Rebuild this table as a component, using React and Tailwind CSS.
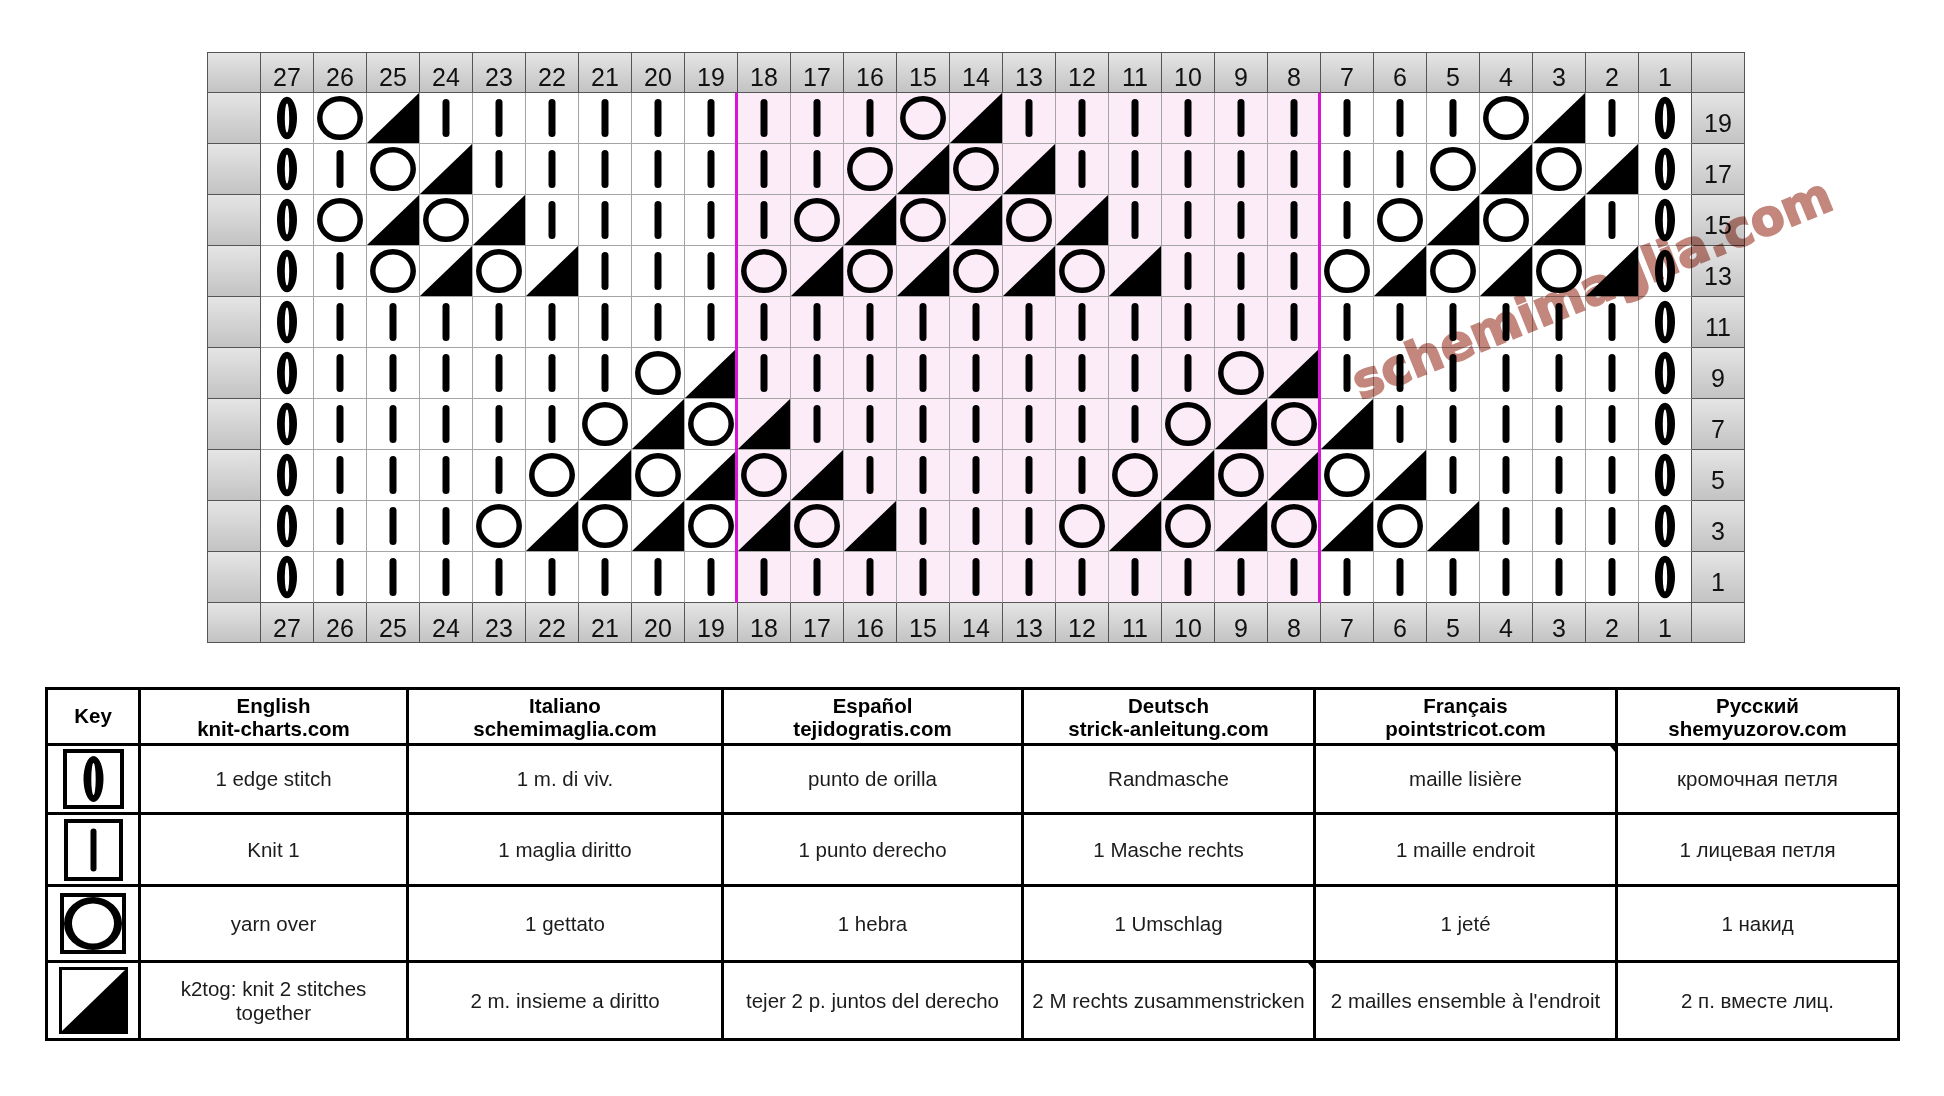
import React from 'react';

// chart rows, stitches listed from column 27 to column 1
// E = edge stitch, K = knit, O = yarn over, T = k2tog
const chartRows = [
  { n: 19, s: 'EOT' + 'KKKKKKKKK' + 'OT' + 'KKKKKKKKK' + 'OT' + 'K' + 'E' },
  { n: 17, s: 'EKOT' + 'KKKKKKK' + 'OTOT' + 'KKKKKKK' + 'OTOT' + 'E' },
  { n: 15, s: 'EOTOT' + 'KKKKK' + 'OTOTOT' + 'KKKKK' + 'OTOT' + 'KE' },
  { n: 13, s: 'EKOTOT' + 'KKK' + 'OTOTOTOT' + 'KKK' + 'OTOTOT' + 'E' },
  { n: 11, s: 'E' + 'K'.repeat(25) + 'E' },
  { n: 9, s: 'E' + 'KKKKKK' + 'OT' + 'KKKKKKKKK' + 'OT' + 'KKKKKK' + 'E' },
  { n: 7, s: 'E' + 'KKKKK' + 'OTOT' + 'KKKKKKK' + 'OTOT' + 'KKKKK' + 'E' },
  { n: 5, s: 'E' + 'KKKK' + 'OTOTOT' + 'KKKKK' + 'OTOTOT' + 'KKKK' + 'E' },
  { n: 3, s: 'E' + 'KKK' + 'OTOTOTOT' + 'KKK' + 'OTOTOTOT' + 'KKK' + 'E' },
  { n: 1, s: 'E' + 'K'.repeat(25) + 'E' },
];

const cols = Array.from({ length: 27 }, (_, i) => 27 - i);

const grayCell =
  'border-r border-b border-[#555] bg-gradient-to-b from-[#e5e5e5] to-[#c3c3c3]';
const numText = "text-[25px] leading-none text-[#111] font-['Liberation_Sans',Arial,sans-serif]";

const Stitch = ({ t }) => {
  if (t === 'E') {
    return (
      <svg viewBox="0 0 52 50" className="w-full h-full">
        <path
          fillRule="evenodd"
          d="M16 25 A10 21.3 0 1 0 36 25 A10 21.3 0 1 0 16 25 Z M23.8 25 A2.2 14.5 0 1 0 28.2 25 A2.2 14.5 0 1 0 23.8 25 Z"
          fill="#000"
        />
      </svg>
    );
  }
  if (t === 'K') {
    return (
      <svg viewBox="0 0 52 50" className="w-full h-full">
        <rect x="22.5" y="6" width="7" height="38" rx="3.5" fill="#000" />
      </svg>
    );
  }
  if (t === 'O') {
    return (
      <svg viewBox="0 0 52 50" className="w-full h-full">
        <ellipse cx="26" cy="25" rx="20.2" ry="19.3" fill="none" stroke="#000" strokeWidth="5.5" />
      </svg>
    );
  }
  return (
    <svg viewBox="0 0 52 50" preserveAspectRatio="none" className="w-full h-full">
      <polygon points="0,50 52,0 52,50" fill="#000" />
    </svg>
  );
};

const Chart = () => (
  <div className="relative ml-[207px] w-fit border-l border-t border-[#555]">
    <div className="grid grid-cols-[repeat(29,53px)] grid-rows-[40px_repeat(10,51px)_40px]">
      <div className={grayCell} />
      {cols.map((c) => (
        <div key={'h' + c} className={`${grayCell} flex items-end justify-center pb-[2px]`}>
          <span className={numText}>{c}</span>
        </div>
      ))}
      <div className={grayCell} />

      {chartRows.map((row, ri) => {
        const last = ri === chartRows.length - 1;
        return (
          <React.Fragment key={row.n}>
            <div className={grayCell} />
            {row.s.split('').map((t, i) => {
              const col = 27 - i;
              const pink = col <= 18 && col >= 8;
              return (
                <div
                  key={i}
                  className={`border-r border-b ${i === 26 ? 'border-r-[#555]' : 'border-r-[#a5a5a5]'} ${
                    last ? 'border-b-[#555]' : 'border-b-[#a5a5a5]'
                  } ${pink ? 'bg-[#fcecf8]' : 'bg-white'}`}
                >
                  <Stitch t={t} />
                </div>
              );
            })}
            <div className={`${grayCell} flex items-end justify-center pb-[7px]`}>
              <span className={numText}>{row.n}</span>
            </div>
          </React.Fragment>
        );
      })}

      <div className={grayCell} />
      {cols.map((c) => (
        <div key={'f' + c} className={`${grayCell} flex items-end justify-center pb-[1px]`}>
          <span className={numText}>{c}</span>
        </div>
      ))}
      <div className={grayCell} />
    </div>

    {/* repeat markers */}
    <div className="absolute top-[40px] left-[527px] w-[3px] h-[510px] bg-[#d816d8]" />
    <div className="absolute top-[40px] left-[1110px] w-[3px] h-[510px] bg-[#d816d8]" />
  </div>
);

const KeyEdge = () => (
  <div className="w-[61px] h-[60px] border-4 border-black">
    <svg viewBox="0 0 53 52" className="w-full h-full">
      <path
        fillRule="evenodd"
        d="M16.5 26 A10 23 0 1 0 36.5 26 A10 23 0 1 0 16.5 26 Z M24.3 26 A2.2 16 0 1 0 28.7 26 A2.2 16 0 1 0 24.3 26 Z"
        fill="#000"
      />
    </svg>
  </div>
);

const KeyKnit = () => (
  <div className="w-[59px] h-[62px] border-4 border-black">
    <svg viewBox="0 0 51 54" className="w-full h-full">
      <rect x="22.5" y="5.5" width="6" height="43" rx="3" fill="#000" />
    </svg>
  </div>
);

const KeyYarn = () => (
  <div className="w-[66px] h-[61px] border-4 border-black">
    <svg viewBox="0 0 58 53" className="w-full h-full">
      <path
        fillRule="evenodd"
        d="M0 26.5 A29 26.5 0 1 0 58 26.5 A29 26.5 0 1 0 0 26.5 Z M8 26.5 A21 20 0 1 0 50 26.5 A21 20 0 1 0 8 26.5 Z"
        fill="#000"
      />
    </svg>
  </div>
);

const KeyDec = () => (
  <div className="w-[69px] h-[67px] border-[3px] border-black">
    <svg viewBox="0 0 63 61" preserveAspectRatio="none" className="w-full h-full">
      <polygon points="0,61 63,0 63,61" fill="#000" />
    </svg>
  </div>
);

const headers = [
  ['English', 'knit-charts.com'],
  ['Italiano', 'schemimaglia.com'],
  ['Español', 'tejidogratis.com'],
  ['Deutsch', 'strick-anleitung.com'],
  ['Français', 'pointstricot.com'],
  ['Русский', 'shemyuzorov.com'],
];

const keyRows = [
  {
    icon: <KeyEdge />,
    cells: ['1 edge stitch', '1 m. di viv.', 'punto de orilla', 'Randmasche', 'maille lisière', 'кромочная петля'],
  },
  {
    icon: <KeyKnit />,
    cells: ['Knit 1', '1 maglia diritto', '1 punto derecho', '1 Masche rechts', '1 maille endroit', '1 лицевая петля'],
  },
  {
    icon: <KeyYarn />,
    cells: ['yarn over', '1 gettato', '1 hebra', '1 Umschlag', '1 jeté', '1 накид'],
  },
  {
    icon: <KeyDec />,
    cells: [
      <>
        k2tog: knit 2 stitches
        <br />
        together
      </>,
      '2 m. insieme a diritto',
      'tejer 2 p. juntos del derecho',
      '2 M rechts zusammenstricken',
      "2 mailles ensemble à l'endroit",
      '2 п. вместе лиц.',
    ],
  },
];

const cell = 'relative border-r-[3px] border-b-[3px] border-black flex items-center justify-center text-center';

const KeyTable = () => (
  <div className="mt-[44px] ml-[45px] w-fit grid grid-cols-[93px_268px_315px_300px_292px_302px_282px] grid-rows-[56px_69px_72px_76px_78px] border-l-[3px] border-t-[3px] border-black font-['Liberation_Sans',Arial,sans-serif]">
    <div className={`${cell} text-[20.5px] font-bold text-black`}>Key</div>
    {headers.map(([lang, site]) => (
      <div key={lang} className={`${cell} flex-col text-[20.5px] leading-[23px] font-bold text-black`}>
        <span>{lang}</span>
        <span>{site}</span>
      </div>
    ))}
    {keyRows.map((row, ri) => (
      <React.Fragment key={ri}>
        <div className={cell}>{row.icon}</div>
        {row.cells.map((txt, ci) => (
          <div key={ci} className={`${cell} px-1 whitespace-nowrap text-[20.5px] leading-[24px] text-[#1c1c1c]`}>
            {txt}
            {ri === 0 && ci === 4 && (
              <span className="absolute top-0 right-0 w-0 h-0 border-l-[5px] border-t-[6px] border-l-transparent border-t-black" />
            )}
            {ri === 3 && ci === 3 && (
              <span className="absolute top-0 right-0 w-0 h-0 border-l-[5px] border-t-[6px] border-l-transparent border-t-black" />
            )}
          </div>
        ))}
      </React.Fragment>
    ))}
  </div>
);

export default function App() {
  return (
    <div className="relative w-[1944px] h-[1096px] bg-white overflow-hidden pt-[52px]">
      <Chart />
      <KeyTable />
      <span className="absolute left-[1592px] top-[289px] -translate-x-1/2 -translate-y-1/2 rotate-[-22deg] whitespace-nowrap font-['DejaVu_Sans',Verdana,sans-serif] font-bold text-[49px] leading-none text-[#c3877d] [-webkit-text-stroke:2px_#c3877d] mix-blend-multiply">
        schemimaglia.com
      </span>
    </div>
  );
}
